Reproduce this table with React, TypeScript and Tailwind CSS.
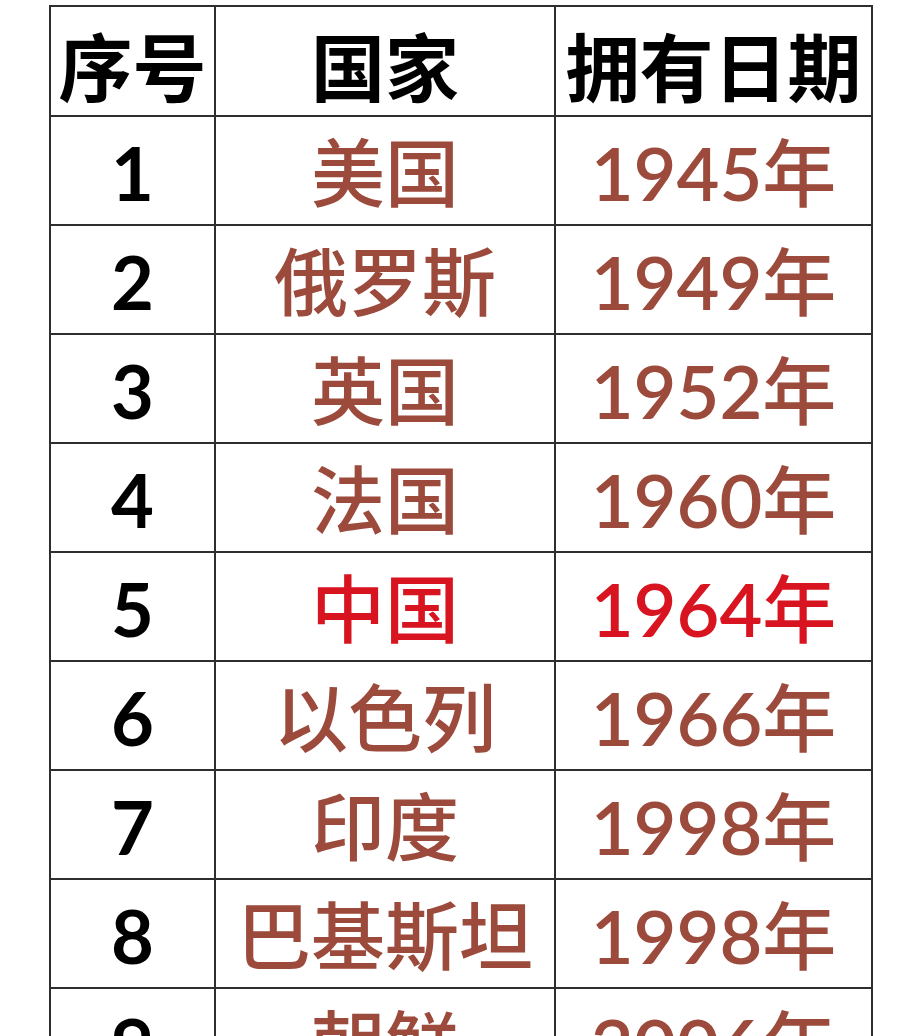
import React from "react";

const rows: [string, string, string, boolean][] = [
  ["1", "美国", "1945", false],
  ["2", "俄罗斯", "1949", false],
  ["3", "英国", "1952", false],
  ["4", "法国", "1960", false],
  ["5", "中国", "1964", true],
  ["6", "以色列", "1966", false],
  ["7", "印度", "1998", false],
  ["8", "巴基斯坦", "1998", false],
  ["9", "朝鲜", "2006", false],
];

const base =
  "border-2 border-[#2e2e2e] p-0 text-[74px] leading-none text-center whitespace-nowrap";

export default function App() {
  return (
    <div
      className="w-[922px] h-[1036px] overflow-hidden bg-white pt-[5px] pl-[49px]"
      style={{ fontFamily: 'Lato, "Noto Sans CJK SC", sans-serif' }}
    >
      <table className="border-collapse table-fixed w-[822px]">
        <colgroup>
          <col className="w-[165px]" />
          <col className="w-[340px]" />
          <col className="w-[317px]" />
        </colgroup>
        <thead>
          <tr className="h-[110px]">
            <th className={`${base} font-bold text-black pt-[14px]`}>序号</th>
            <th className={`${base} font-bold text-black pt-[14px]`}>国家</th>
            <th className={`${base} font-bold text-black pt-[14px]`}>拥有日期</th>
          </tr>
        </thead>
        <tbody>
          {rows.map(([n, c, y, hl]) => (
            <tr key={n} className="h-[109px]">
              <td className={`${base} font-bold text-black pt-[4px]`}>{n}</td>
              <td
                className={
                  hl
                    ? `${base} font-medium text-[#d7141f] pt-[4px]`
                    : `${base} font-medium text-[#9c4a3b] pt-[4px]`
                }
              >
                {c}
              </td>
              <td
                className={
                  hl
                    ? `${base} font-medium text-[#d7141f] pt-[4px]`
                    : `${base} font-medium text-[#9c4a3b] pt-[4px]`
                }
              >
                <span className="font-semibold">{y}</span>
                <span>年</span>
              </td>
            </tr>
          ))}
        </tbody>
      </table>
    </div>
  );
}
